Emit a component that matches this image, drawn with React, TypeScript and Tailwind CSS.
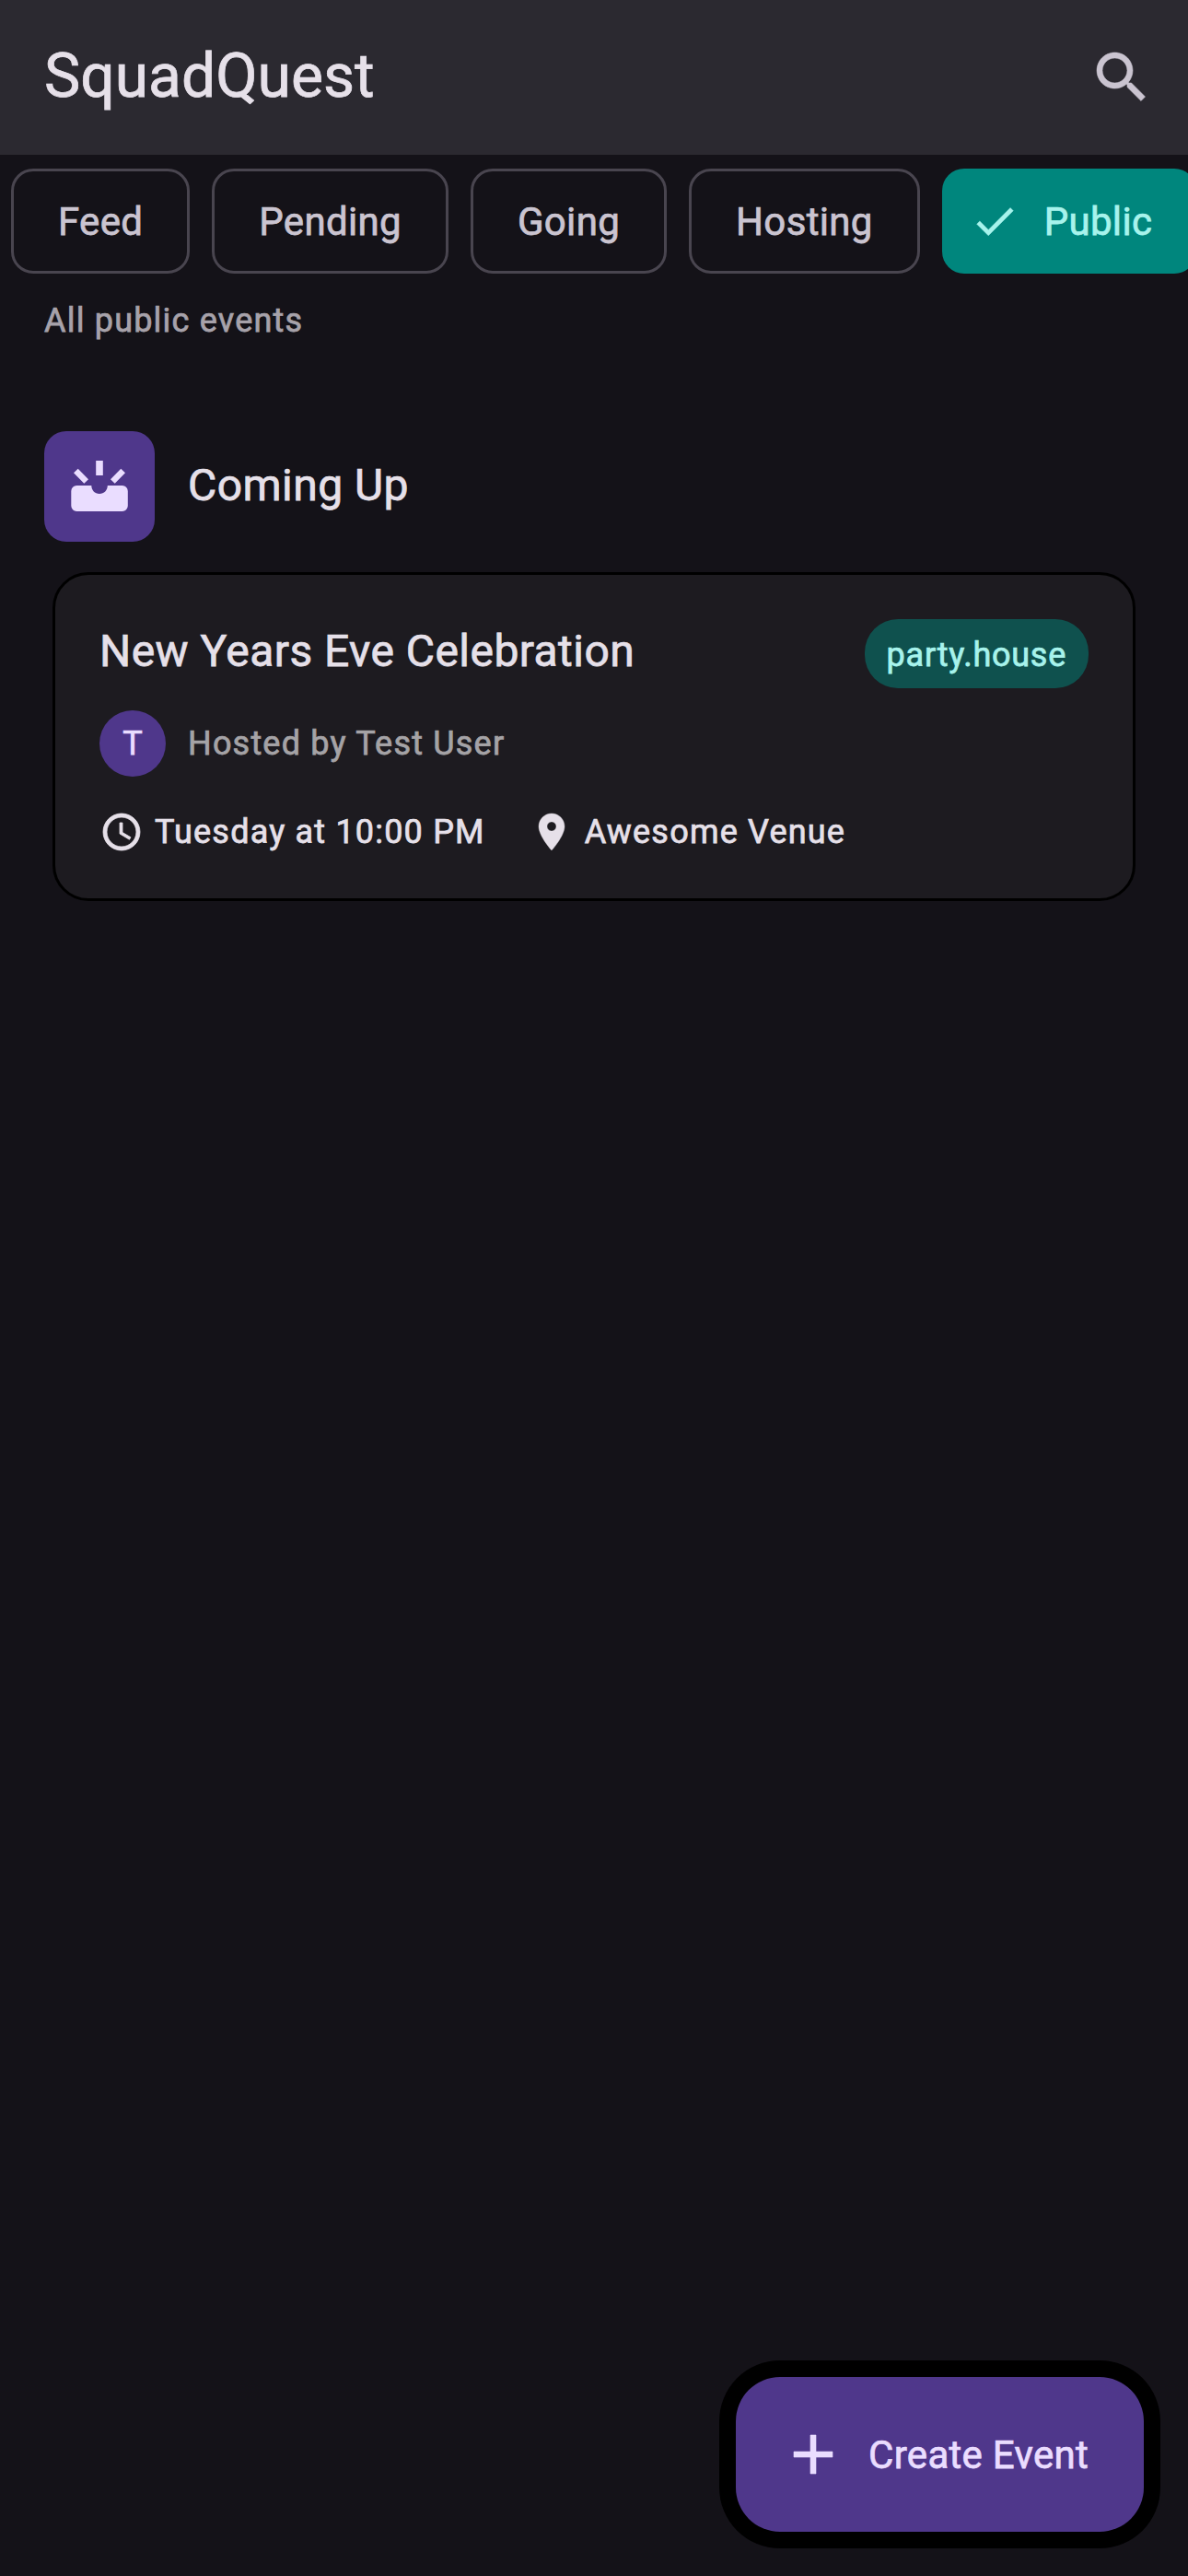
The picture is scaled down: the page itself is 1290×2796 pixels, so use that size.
import React from "react";

const chips = ["Feed", "Pending", "Going", "Hosting"];

function Icon({ d, className, weight = 0.2 }: { d: string; className: string; weight?: number }) {
  return (
    <svg viewBox="0 0 24 24" fill="currentColor" stroke="currentColor" strokeWidth={weight} className={className}>
      <path d={d} />
    </svg>
  );
}

const SEARCH =
  "M15.5 14h-.79l-.28-.27C15.41 12.59 16 11.11 16 9.5 16 5.91 13.09 3 9.5 3S3 5.91 3 9.5 5.91 16 9.5 16c1.61 0 3.09-.59 4.23-1.57l.27.28v.79l5 4.99L20.49 19l-4.99-5zm-6 0C7.01 14 5 11.99 5 9.5S7.01 5 9.5 5 14 7.01 14 9.5 11.99 14 9.5 14z";
const CHECK = "M9 16.17L4.83 12l-1.42 1.41L9 19 21 7l-1.41-1.41z";
const CLOCK =
  "M11.99 2C6.47 2 2 6.48 2 12s4.47 10 9.99 10C17.52 22 22 17.52 22 12S17.52 2 11.99 2zM12 20c-4.42 0-8-3.58-8-8s3.58-8 8-8 8 3.58 8 8-3.58 8-8 8zm.5-13H11v6l5.25 3.15.75-1.23-4.5-2.67z";
const PIN =
  "M12 2C8.13 2 5 5.13 5 9c0 5.25 7 13 7 13s7-7.75 7-13c0-3.87-3.13-7-7-7zm0 9.5c-1.38 0-2.5-1.12-2.5-2.5s1.12-2.5 2.5-2.5 2.5 1.12 2.5 2.5-1.12 2.5-2.5 2.5z";
const PLUS = "M19 13h-6v6h-2v-6H5v-2h6V5h2v6h6v2z";

export default function App() {
  return (
    <div className="relative flex h-[2796px] w-[1290px] flex-col overflow-hidden bg-[#141218] font-['Roboto',sans-serif] text-[#e6e0e9] [-webkit-text-stroke:0.75px_currentColor]">
      <header className="flex h-[168px] shrink-0 items-center justify-between bg-[#2b2930] pr-9 pl-12">
        <h1 className="-mt-[3px] text-[66px] leading-[84px]">SquadQuest</h1>
        <Icon d={SEARCH} className="size-[72px] text-[#cac4d0]" />
      </header>

      <nav className="mt-[15px] flex shrink-0 gap-6 pl-3 text-[42px] leading-[60px] tracking-[0.32px]">
        {chips.map((c) => (
          <div
            key={c}
            className="flex h-[114px] shrink-0 items-center rounded-3xl border-3 border-[#49454f] px-12 text-[#cac4d0]"
          >
            <span className="pt-0.5">{c}</span>
          </div>
        ))}
        <div className="flex h-[114px] shrink-0 items-center rounded-3xl bg-[#00867d] pr-12 pl-[30px] text-[#a7f3ec]">
          <Icon d={CHECK} className="mr-[27px] size-[54px]" />
          <span className="pt-0.5">Public</span>
        </div>
      </nav>

      <p className="mt-[27px] pl-12 text-[36px] leading-[48px] tracking-[1.2px] text-[#a7a2aa]">All public events</p>

      <section className="mt-24 flex items-center gap-9 pl-12">
        <div className="flex size-[120px] items-center justify-center rounded-3xl bg-[#4f378b]">
          <svg viewBox="0 0 72 72" fill="#eaddff" className="size-[72px]">
            <path d="M32.2 8h7.6v16h-7.6zM8 21.3l4.7-4.6L24 28.3l-4.7 4.4zM64 21.3l-4.7-4.6L48 28.3l4.7 4.4z" />
            <path d="M11.3 35H27.3C27.3 40 31 44 36 44S44.8 40 44.8 35H60.8a6 6 0 0 1 6 6V57a6 6 0 0 1-6 6H11.3a6 6 0 0 1-6-6V41a6 6 0 0 1 6-6z" />
          </svg>
        </div>
        <h2 className="-mt-[3px] text-[48px] leading-[72px] tracking-[0.45px]">Coming Up</h2>
      </section>

      <article className="mx-[57px] mt-[33px] flex h-[357px] flex-col rounded-[39px] border-3 border-black bg-[#1d1b20] px-12 pt-12">
        <div className="flex items-start justify-between">
          <h3 className="-mt-px text-[48px] leading-[72px] tracking-[0.45px]">New Years Eve Celebration</h3>
          <span className="flex h-[75px] items-center rounded-[36px] bg-[#0f514e] px-6 pt-0.5 text-[36px] leading-[48px] tracking-[0.75px] text-[#a7f3ec]">
            party.house
          </span>
        </div>
        <div className="mt-6 flex items-center gap-6">
          <div className="flex size-[72px] items-center justify-center rounded-full bg-[#4f378b] text-[36px] text-[#eaddff]">
            T
          </div>
          <span className="text-[36px] leading-[48px] tracking-[1.2px] text-[#a5a3a6]">Hosted by Test User</span>
        </div>
        <div className="mt-9 flex items-center text-[36px] leading-[48px] tracking-[1.2px]">
          <Icon d={CLOCK} weight={0.4} className="mr-3 size-12" />
          <span>Tuesday at 10:00 PM</span>
          <Icon d={PIN} className="mr-3 ml-12 size-12" />
          <span>Awesome Venue</span>
        </div>
      </article>

      <button className="absolute right-12 bottom-12 flex h-[168px] items-center gap-6 rounded-[48px] bg-[#4f378b] pr-[60px] pl-12 text-[42px] leading-[60px] tracking-[0.3px] text-[#eaddff] ring-18 ring-black">
        <Icon d={PLUS} className="size-[72px]" />
        <span className="pt-0.5">Create Event</span>
      </button>
    </div>
  );
}
